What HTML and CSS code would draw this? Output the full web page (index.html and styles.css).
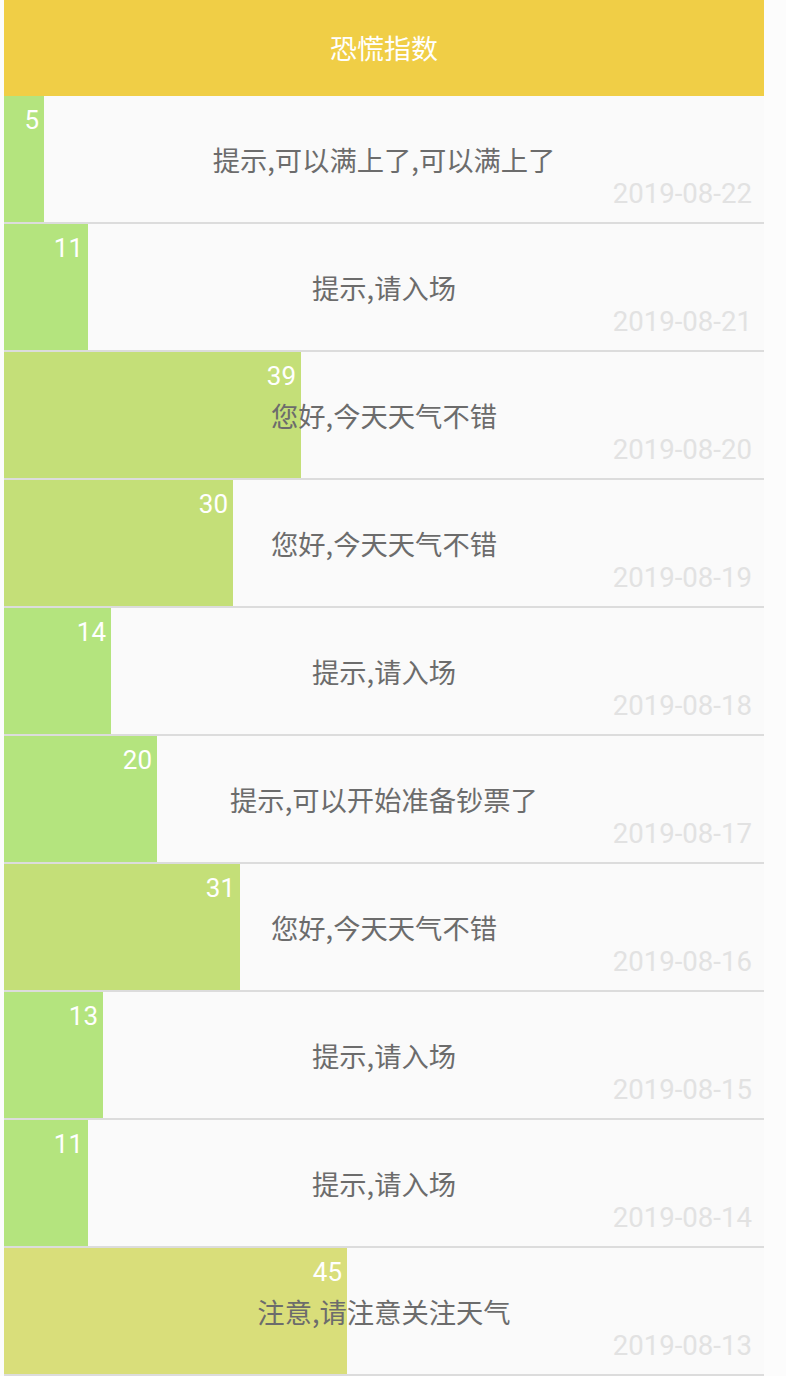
FILE: index.html
```html
<!DOCTYPE html>
<html lang="zh-CN">
<head>
<meta charset="utf-8">
<title>恐慌指数</title>
<link rel="stylesheet" href="styles.css">
</head>
<body>
<div class="app">
  <header class="title-bar">恐慌指数</header>
  <ul class="list">
    <li class="row">
      <div class="bar bar-low" style="width:40px"><span class="num">5</span></div>
      <div class="msg">提示,可以满上了,可以满上了</div>
      <div class="date">2019-08-22</div>
    </li>
    <li class="row">
      <div class="bar bar-low" style="width:84px"><span class="num">11</span></div>
      <div class="msg">提示,请入场</div>
      <div class="date">2019-08-21</div>
    </li>
    <li class="row">
      <div class="bar bar-mid" style="width:297px"><span class="num">39</span></div>
      <div class="msg">您好,今天天气不错</div>
      <div class="date">2019-08-20</div>
    </li>
    <li class="row">
      <div class="bar bar-mid" style="width:229px"><span class="num">30</span></div>
      <div class="msg">您好,今天天气不错</div>
      <div class="date">2019-08-19</div>
    </li>
    <li class="row">
      <div class="bar bar-low" style="width:107px"><span class="num">14</span></div>
      <div class="msg">提示,请入场</div>
      <div class="date">2019-08-18</div>
    </li>
    <li class="row">
      <div class="bar bar-low" style="width:153px"><span class="num">20</span></div>
      <div class="msg">提示,可以开始准备钞票了</div>
      <div class="date">2019-08-17</div>
    </li>
    <li class="row">
      <div class="bar bar-mid" style="width:236px"><span class="num">31</span></div>
      <div class="msg">您好,今天天气不错</div>
      <div class="date">2019-08-16</div>
    </li>
    <li class="row">
      <div class="bar bar-low" style="width:99px"><span class="num">13</span></div>
      <div class="msg">提示,请入场</div>
      <div class="date">2019-08-15</div>
    </li>
    <li class="row">
      <div class="bar bar-low" style="width:84px"><span class="num">11</span></div>
      <div class="msg">提示,请入场</div>
      <div class="date">2019-08-14</div>
    </li>
    <li class="row">
      <div class="bar bar-high" style="width:343px"><span class="num">45</span></div>
      <div class="msg">注意,请注意关注天气</div>
      <div class="date">2019-08-13</div>
    </li>
  </ul>
</div>
</body>
</html>
```
FILE: styles.css
```css
html, body {
  margin: 0;
  padding: 0;
  background: #fcfcfc;
}

body {
  font-family: Roboto, "Noto Sans CJK SC", sans-serif;
}

.app {
  width: 760px;
  margin-left: 4px;
}

.title-bar {
  height: 96px;
  background: #f0ce46;
  color: #ffffff;
  font-family: "Noto Sans CJK SC", sans-serif;
  font-size: 27px;
  display: flex;
  align-items: center;
  justify-content: center;
  padding-bottom: 2px;
  box-sizing: border-box;
}

.list {
  list-style: none;
  margin: 0;
  padding: 0;
}

.row {
  display: grid;
  grid-template-columns: 100%;
  grid-template-rows: 126px;
  background: #fafafa;
  border-bottom: 2px solid #dcdcdc;
}

.row > * {
  grid-column: 1;
  grid-row: 1;
}

.bar {
  justify-self: start;
  align-self: stretch;
  display: flex;
  justify-content: flex-end;
  align-items: flex-start;
  box-sizing: border-box;
  padding: 11px 5px 0 0;
}

.bar-low { background: #b4e47e; }
.bar-mid { background: #c4df78; }
.bar-high { background: #d9de7a; }

.num {
  color: #ffffff;
  font-family: Roboto, sans-serif;
  font-size: 26px;
  line-height: 1;
}

.msg {
  justify-self: center;
  align-self: center;
  color: #6c6c6c;
  font-family: "Noto Sans CJK SC", sans-serif;
  font-size: 27.3px;
  line-height: 1;
  margin-top: 1px;
}

.date {
  justify-self: end;
  align-self: end;
  color: #e2e2e2;
  font-family: Roboto, sans-serif;
  font-size: 27.6px;
  line-height: 1;
  padding: 0 12px 14px 0;
}
```
